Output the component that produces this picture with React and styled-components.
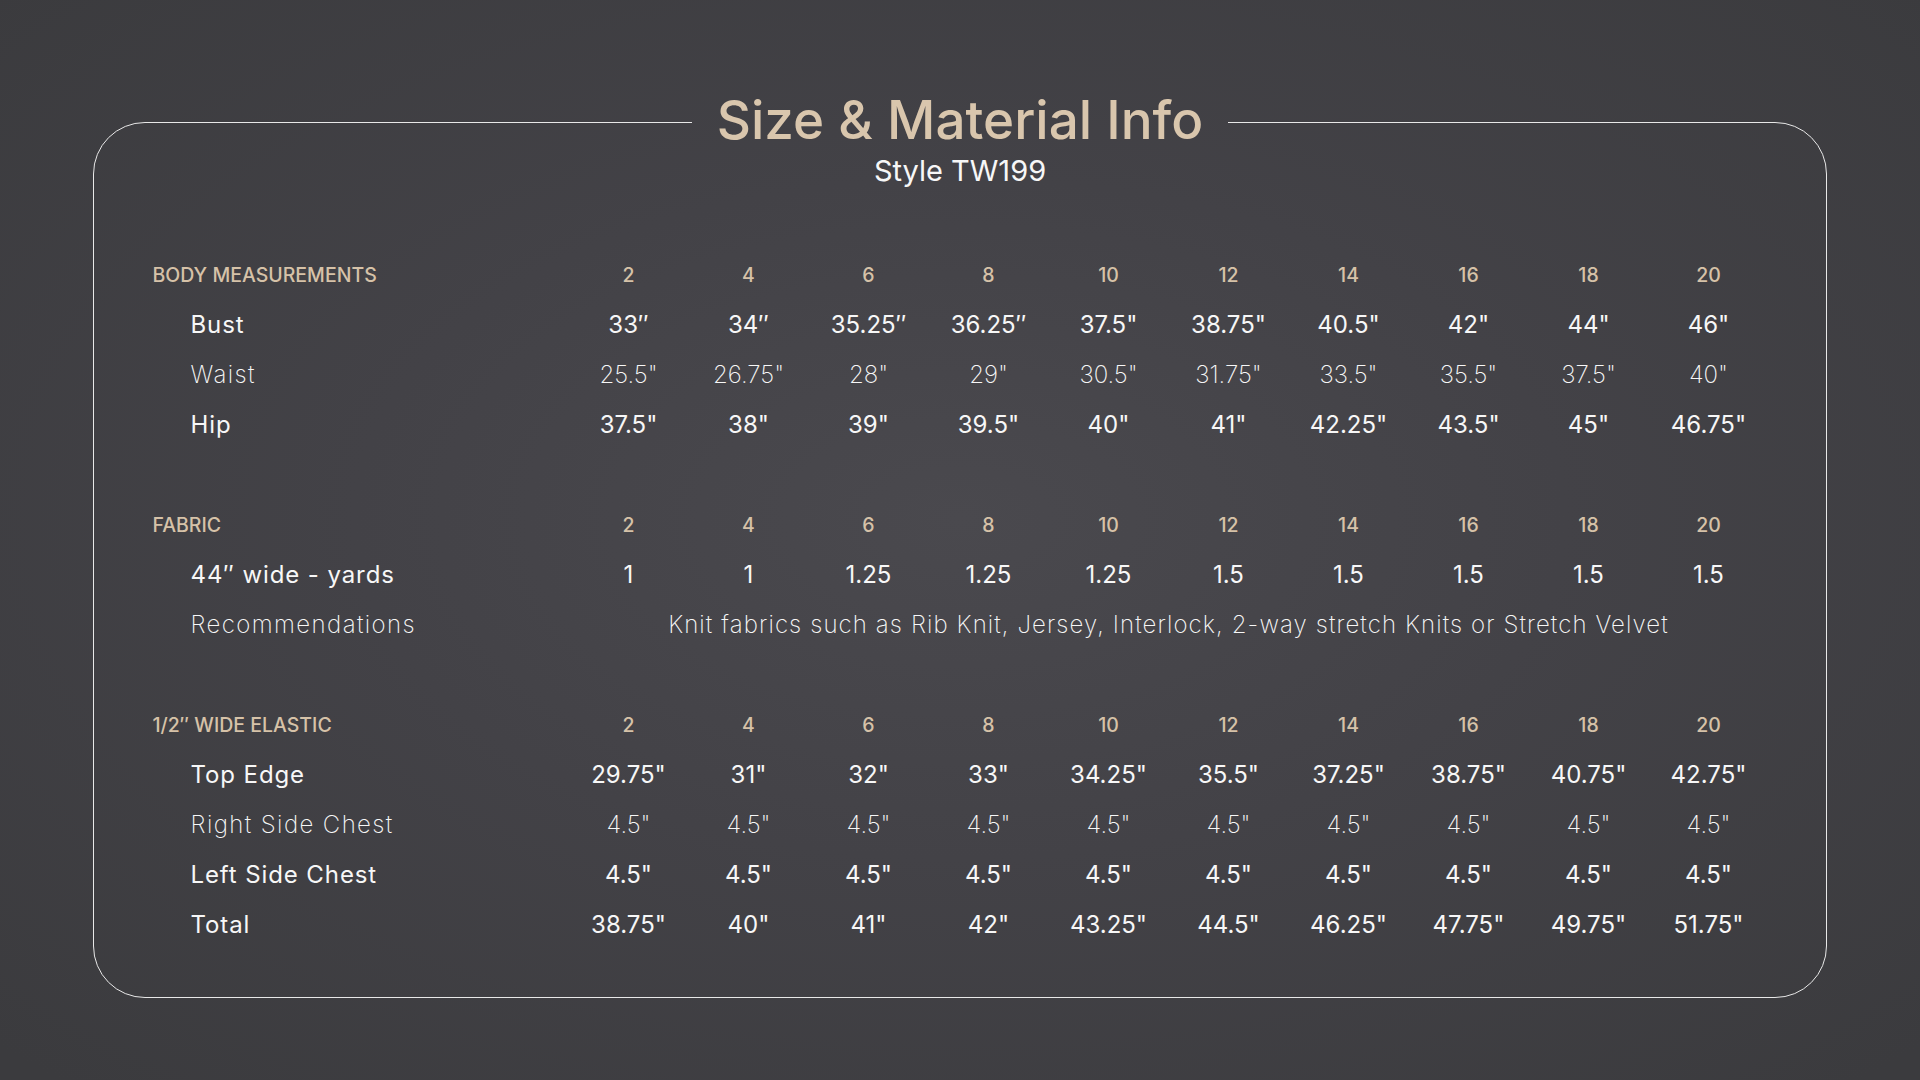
import React from "react";
import styled, { createGlobalStyle } from "styled-components";

const GlobalStyle = createGlobalStyle`
  html, body {
    margin: 0;
    padding: 0;
  }
  body {
    width: 1920px;
    height: 1080px;
    overflow: hidden;
    background: radial-gradient(ellipse 70% 70% at 50% 48%, #4a494e 0%, #434247 45%, #3b3b3e 100%);
    font-family: "Inter", "Noto Sans", sans-serif;
    color: #f7f7f7;
  }
`;

const Page = styled.div`
  width: 1920px;
  height: 1080px;
  box-sizing: border-box;
  padding-top: 90px;
`;

const Card = styled.fieldset`
  box-sizing: border-box;
  width: 1734px;
  margin: 0 auto;
  padding: 0 58.5px 47px;
  border: 1.5px solid #e8e8e8;
  border-radius: 52px;
  min-inline-size: 0;
`;

const Title = styled.legend`
  margin: 0 auto;
  padding: 0 25px 4px;
  font-size: 53px;
  line-height: 60px;
  font-weight: 500;
  color: #d9c6ad;
`;

const Subtitle = styled.div`
  margin-top: -3px;
  text-align: center;
  font-size: 29px;
  line-height: 40px;
  font-weight: 400;
`;

const Table = styled.div`
  margin-top: 59px;
  display: grid;
  grid-template-columns: 416px repeat(10, 120px);
  grid-auto-rows: 50px;
`;

const Spacer = styled.div`
  grid-column: 1 / -1;
`;

const Cell = styled.div`
  display: flex;
  align-items: center;
  justify-content: center;
  white-space: nowrap;
  font-size: 24px;
  line-height: 50px;
  font-weight: ${({ $light }) => ($light ? 250 : 400)};
`;

const Label = styled(Cell)`
  justify-content: flex-start;
  padding-left: 38px;
  letter-spacing: ${({ $light }) => ($light ? "1.4px" : "0.9px")};
`;

const Head = styled(Cell)`
  font-size: 19.5px;
  font-weight: 500;
  color: #d6c2a8;
`;

const HeadLabel = styled(Head)`
  justify-content: flex-start;
`;

const Wide = styled(Cell)`
  grid-column: 2 / -1;
  letter-spacing: 1.1px;
`;

const sizes = ["2", "4", "6", "8", "10", "12", "14", "16", "18", "20"];

const sections = [
  {
    title: "BODY MEASUREMENTS",
    rows: [
      { label: "Bust", values: ["33″", "34″", "35.25″", "36.25″", "37.5\"", "38.75\"", "40.5\"", "42\"", "44\"", "46\""] },
      { label: "Waist", light: true, values: ["25.5\"", "26.75\"", "28\"", "29\"", "30.5\"", "31.75\"", "33.5\"", "35.5\"", "37.5\"", "40\""] },
      { label: "Hip", values: ["37.5\"", "38\"", "39\"", "39.5\"", "40\"", "41\"", "42.25\"", "43.5\"", "45\"", "46.75\""] },
    ],
  },
  {
    title: "FABRIC",
    rows: [
      { label: "44″ wide - yards", values: ["1", "1", "1.25", "1.25", "1.25", "1.5", "1.5", "1.5", "1.5", "1.5"] },
      { label: "Recommendations", light: true, text: "Knit fabrics such as Rib Knit, Jersey, Interlock, 2-way stretch Knits or Stretch Velvet" },
    ],
  },
  {
    title: "1/2″ WIDE ELASTIC",
    rows: [
      { label: "Top Edge", values: ["29.75\"", "31\"", "32\"", "33\"", "34.25\"", "35.5\"", "37.25\"", "38.75\"", "40.75\"", "42.75\""] },
      { label: "Right Side Chest", light: true, values: Array(10).fill("4.5\"") },
      { label: "Left Side Chest", values: Array(10).fill("4.5\"") },
      { label: "Total", values: ["38.75\"", "40\"", "41\"", "42\"", "43.25\"", "44.5\"", "46.25\"", "47.75\"", "49.75\"", "51.75\""] },
    ],
  },
];

const Section = ({ section }) => (
  <>
    <HeadLabel>{section.title}</HeadLabel>
    {sizes.map((s) => (
      <Head key={s}>{s}</Head>
    ))}
    {section.rows.map((row) => (
      <React.Fragment key={row.label}>
        <Label $light={row.light}>{row.label}</Label>
        {row.text ? (
          <Wide $light={row.light}>{row.text}</Wide>
        ) : (
          row.values.map((v, i) => (
            <Cell key={i} $light={row.light}>
              {v}
            </Cell>
          ))
        )}
      </React.Fragment>
    ))}
  </>
);

const App = () => (
  <Page>
    <GlobalStyle />
    <Card>
      <Title>Size &amp; Material Info</Title>
      <Subtitle>Style TW199</Subtitle>
      <Table>
        {sections.map((section, i) => (
          <React.Fragment key={section.title}>
            {i > 0 && <Spacer />}
            <Section section={section} />
          </React.Fragment>
        ))}
      </Table>
    </Card>
  </Page>
);

export default App;
